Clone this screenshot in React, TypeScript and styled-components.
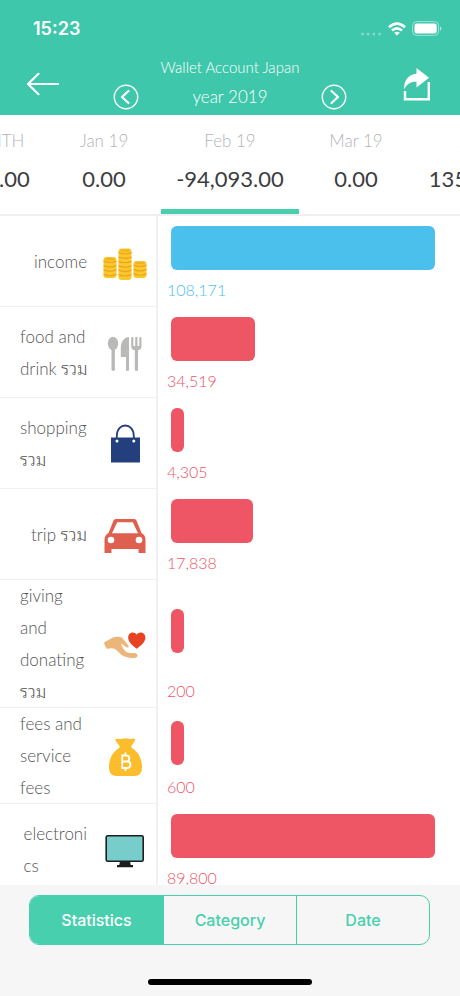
import React from "react";
import styled, { createGlobalStyle } from "styled-components";

const GREEN = "#3fc7ab";
const MINT = "#48cfad";
const RED = "#ee5565";
const BLUE = "#4bc0ec";

const Global = createGlobalStyle`
  * { box-sizing: border-box; }
  body { margin: 0; background: #fff; }
  button { font: inherit; color: inherit; background: none; border: 0; padding: 0; cursor: pointer; }
  svg { display: block; }
`;

const Screen = styled.div`
  display: flex;
  flex-direction: column;
  height: 100vh;
  overflow: hidden;
  background: #fff;
  color: #555;
  font-family: Lato, "Noto Sans Thai Looped", Loma, Waree, Garuda, "Noto Sans Thai", sans-serif;
  font-weight: 300;
`;

const Header = styled.header`
  flex: none;
  background: ${GREEN};
  color: #fff;
`;

const StatusBar = styled.div`
  display: flex;
  align-items: center;
  justify-content: space-between;
  height: 53px;
  padding: 4px 17px 0 33px;
  font: 600 18px/24px Inter, sans-serif;
`;

const StatusIcons = styled.div`
  display: flex;
  align-items: center;
  gap: 6px;
`;

const NavBar = styled.div`
  display: grid;
  grid-template-columns: 60px 1fr 60px;
  align-items: center;
  height: 62px;
  padding: 0 13px;
`;

const NavButton = styled.button`
  display: flex;
  justify-content: center;
`;

const NavTitle = styled.div`
  display: flex;
  flex-direction: column;
  align-items: center;
  padding-bottom: 2px;
`;

const AccountName = styled.h1`
  margin: 0;
  font-size: 15px;
  line-height: 28px;
  font-weight: 300;
`;

const YearPicker = styled.div`
  display: flex;
  align-items: center;
  justify-content: space-between;
  width: 234px;
  height: 32px;
  font-size: 17px;
`;

const Year = styled.span`
  padding-bottom: 2px;
`;

const Months = styled.nav`
  flex: none;
  display: grid;
  grid-template-columns: 130px repeat(3, 126px) 132px;
  justify-content: center;
  height: 101px;
  padding-left: 2px;
  overflow: hidden;
  border-bottom: 2px solid #f0f0f0;
`;

const Month = styled.button<{ $active?: boolean }>`
  position: relative;
  display: flex;
  flex-direction: column;
  align-items: center;
  padding-top: 14px;
  white-space: nowrap;

  &::after {
    content: "";
    display: ${(p) => (p.$active ? "block" : "none")};
    position: absolute;
    inset: auto -6px 0;
    height: 5px;
    background: ${MINT};
  }
`;

const MonthName = styled.span`
  font-size: 17px;
  line-height: 24px;
  color: #b4b4b8;
`;

const MonthTotal = styled.span`
  margin-top: 14px;
  font-size: 22px;
  line-height: 24px;
  font-weight: 400;
  color: #3c3c40;
`;

const Rows = styled.ul`
  flex: 1;
  min-height: 0;
  margin: 0;
  padding: 0;
  overflow: hidden;
  list-style: none;
`;

const Row = styled.li`
  display: grid;
  grid-template-columns: 158px 1fr;
  min-height: 91px;
`;

const Category = styled.div`
  display: flex;
  align-items: center;
  justify-content: flex-end;
  gap: 16px;
  padding: 0 9px 0 20px;
  border-right: 2px solid #f0f0f0;
  box-shadow: inset 0 -1px #f0f0f0;
`;

const CategoryName = styled.span<{ $fill?: boolean }>`
  width: ${(p) => (p.$fill ? "67px" : "auto")};
  font-size: 17px;
  line-height: 32px;
  white-space: pre;
`;

const Measure = styled.div`
  display: flex;
  flex-direction: column;
  padding: 0 25px 0 9px;
`;

const BarArea = styled.div`
  flex: 1;
  display: flex;
  align-items: center;
  padding-left: 4px;
`;

const Bar = styled.div<{ $color: string }>`
  min-width: 13px;
  height: 44px;
  border-radius: 6px;
  background: ${(p) => p.$color};
`;

const Amount = styled.span<{ $color: string }>`
  padding-bottom: 7px;
  font-size: 16px;
  line-height: 20px;
  color: ${(p) => p.$color};
`;

const Footer = styled.footer`
  flex: none;
  display: flex;
  flex-direction: column;
  align-items: center;
  gap: 34px;
  padding: 10px 30px 11px 29px;
  background: #f6f6f6;
`;

const Segments = styled.div`
  display: grid;
  grid-template-columns: repeat(3, 1fr);
  width: 100%;
  height: 50px;
  overflow: hidden;
  border: 1px solid ${MINT};
  border-radius: 10px;
`;

const Segment = styled.button<{ $active?: boolean }>`
  font: 500 16px/24px Inter, sans-serif;
  color: ${(p) => (p.$active ? "#fff" : MINT)};
  background: ${(p) => (p.$active ? MINT : "transparent")};

  & + & { border-left: 1px solid ${MINT}; }
`;

const HomeIndicator = styled.div`
  width: 164px;
  height: 6px;
  border-radius: 3px;
  background: #000;
`;

const CoinStack = ({ x, top, bottom }: { x: number; top: number; bottom: number }) => {
  const lines: number[] = [];
  for (let y = top + 5; y < bottom - 1; y += 4.4) lines.push(y);
  return (
    <g>
      <rect x={x} y={top} width="13" height={bottom - top} rx="3" fill="#fcc72c" />
      {lines.map((y) => (
        <path key={y} d={`M${x} ${y - 1}q6.500 3 13 0`} fill="none" stroke="#e9a31c" strokeWidth="1.100" />
      ))}
      <ellipse cx={x + 6.5} cy={top + 2} rx="5" ry="1.300" fill="#f5b324" />
    </g>
  );
};

const icons: Record<string, React.ReactNode> = {
  coins: (
    <>
      <CoinStack x={0.5} top={17} bottom={38} />
      <CoinStack x={15.5} top={8.5} bottom={40} />
      <CoinStack x={30.5} top={21} bottom={38} />
    </>
  ),
  cutlery: (
    <g fill="#b9b9b7">
      <ellipse cx="10" cy="12.500" rx="5.200" ry="6.800" />
      <rect x="8.500" y="16" width="3.400" height="24" rx="1.700" />
      <path d="M26 6v32.500a1.500 1.500 0 0 1-3 0V26h-5.200V17c0-6 3-10.500 8.200-11z" />
      <path d="M28.200 7a1.100 1.100 0 0 1 2.200 0v8h1.800V7a1.100 1.100 0 0 1 2.300 0v8h1.800V7a1.100 1.100 0 0 1 2.200 0v8.500c0 2-1.200 3.300-3.500 3.700v19.300a1.600 1.600 0 0 1-3.200 0V19.200c-2.400-.4-3.600-1.700-3.600-3.700z" />
    </g>
  ),
  shopping: (
    <>
      <path d="M8 15.500h29v25H8z" fill="#243f7d" />
      <path d="M13.800 18.500V14c0-14 17-14 17 0v4.500" fill="none" stroke="#243f7d" strokeWidth="1.800" />
      <circle cx="14" cy="19" r="1.500" fill="#fff" />
      <circle cx="30.800" cy="19" r="1.500" fill="#fff" />
    </>
  ),
  car: (
    <>
      <path
        fillRule="evenodd"
        fill="#e0604f"
        d="M13.500 6h17c1.600 0 2.600.6 3.200 2l4.800 12c2.600 1.500 4 3.500 4 6.500V40h-7v-4h-27v4h-7V26.500c0-3 1.400-5 4-6.500l4.800-12c.6-1.400 1.600-2 3.200-2zm.7 3.200L9 20.300h26L29.800 9.200z"
      />
      <circle cx="8" cy="27" r="3.300" fill="#fff" />
      <circle cx="36" cy="27" r="3.300" fill="#fff" />
    </>
  ),
  giving: (
    <>
      <path
        fill="#ecb67a"
        d="M1 20.500l8.500-4.700c2.600-1.300 7-1.300 9.500-.3l6.500 8.200c.8 1.500-.9 2.400-2.200 1.500l-5.300-4c1 3.800 3.200 7.700 6.300 9.300 2.900 1.200 6.500 0 9.200 1.200 1.700 1 1 3.600-1 4-4.500.5-9 0-12.500-1.900-3.500-2.300-6.200-6.600-9.500-7.400-3.200-.5-5.200.8-7 .2C2.500 24.500 1.200 22.500 1 20.500z"
      />
      <path
        fill="#e74323"
        d="M33.700 26.700c-4.200-3.200-8.500-6.700-8.500-11 0-5.300 6-6.800 8.500-3 2.500-3.800 8.700-2.300 8.700 3 0 4.300-4.400 7.800-8.700 11z"
      />
    </>
  ),
  fees: (
    <>
      <path
        fill="#fbbd2c"
        d="M12.800 5.200c2-1.300 4 .2 6.500-.5 2.200-.7 4.200-.7 6.400 0 2.500.7 4.500-.8 6 .3.700.5.4 1.200 0 1.900L28.500 12v1.800C34.500 17 39 24 39 33c0 6-2.500 9-8 9H14c-5.500 0-8-3-8-9 0-9 4.500-16 10.500-19.200V12l-3.700-5c-.4-.7-.6-1.300 0-1.800z"
      />
      <path
        d="M19.200 21v13.500M18.400 21.500h4.800c4.200 0 4.200 6 0 6h-4M19.200 27.500h4.800c4.600 0 4.600 6.500 0 6.500h-5.600M22.500 18.500v3M22.500 34v3"
        fill="none"
        stroke="#fff"
        strokeWidth="1.800"
      />
    </>
  ),
  monitor: (
    <>
      <path d="M17 33h10l.7 4H30v2.200H14V37h2.300z" fill="#1d1d1f" />
      <rect x="3.200" y="7.700" width="37" height="25.500" rx="1.500" fill="#76cdc9" stroke="#1d1d1f" strokeWidth="1.600" />
    </>
  ),
};

const months = [
  { name: "ALL MONTH", total: "-94,093.00" },
  { name: "Jan 19", total: "0.00" },
  { name: "Feb 19", total: "-94,093.00", active: true },
  { name: "Mar 19", total: "0.00" },
  { name: "Apr 19", total: "135,000.00" },
];

const rows = [
  { name: "income", icon: "coins", amount: "108,171", share: 100, color: BLUE },
  { name: "food and\ndrink รวม", icon: "cutlery", amount: "34,519", share: 32, color: RED, fill: true },
  { name: "shopping\nรวม", icon: "shopping", amount: "4,305", share: 4, color: RED, fill: true },
  { name: "trip รวม", icon: "car", amount: "17,838", share: 31, color: RED },
  { name: "giving\nand\ndonating\nรวม", icon: "giving", amount: "200", share: 1, color: RED, fill: true },
  { name: "fees and\nservice\nfees", icon: "fees", amount: "600", share: 1, color: RED, fill: true },
  { name: "electroni\ncs", icon: "monitor", amount: "89,800", share: 100, color: RED },
];

const Chevron = ({ d }: { d: string }) => (
  <svg width="26" height="26" viewBox="0 0 26 26" fill="none" stroke="#fff">
    <circle cx="13" cy="13" r="11.700" strokeWidth="1.400" />
    <path d={d} strokeWidth="2.200" strokeLinecap="round" strokeLinejoin="round" />
  </svg>
);

export default function App() {
  return (
    <Screen>
      <Global />
      <Header>
        <StatusBar>
          <span>15:23</span>
          <StatusIcons>
            <svg width="22" height="14" viewBox="0 0 22 14" fill="#fff" opacity="0.350">
              <circle cx="2.500" cy="12" r="1.500" />
              <circle cx="8.200" cy="12" r="1.500" />
              <circle cx="13.900" cy="12" r="1.500" />
              <circle cx="19.600" cy="12" r="1.500" />
            </svg>
            <svg width="18" height="14" viewBox="0 0 18 14" fill="none" stroke="#fff" strokeWidth="2.600">
              <path d="M1 5.300q8-7.400 16 0M4 8.600q5-4.400 10 0" />
              <path d="M9 13.500L6.200 10.800q2.800-2.200 5.600 0z" fill="#fff" stroke="none" />
            </svg>
            <svg width="31" height="15" viewBox="0 0 31 15">
              <rect x="0.600" y="0.600" width="26" height="13.800" rx="4" fill="none" stroke="#fff" strokeOpacity="0.500" />
              <rect x="2.500" y="2.500" width="22.200" height="10" rx="2.200" fill="#fff" />
              <path d="M28 5.200q3 2.300 0 4.600z" fill="#fff" fillOpacity="0.600" />
            </svg>
          </StatusIcons>
        </StatusBar>
        <NavBar>
          <NavButton aria-label="Back">
            <svg width="34" height="24" viewBox="0 0 34 24" fill="none" stroke="#fff" strokeWidth="2.200" strokeLinecap="round" strokeLinejoin="round">
              <path d="M32 12H2M12.500 1.800L2 12l10.500 10.200" />
            </svg>
          </NavButton>
          <NavTitle>
            <AccountName>Wallet Account Japan</AccountName>
            <YearPicker>
              <NavButton aria-label="Previous year">
                <Chevron d="M15.500 7l-6.500 6 6.500 6" />
              </NavButton>
              <Year>year 2019</Year>
              <NavButton aria-label="Next year">
                <Chevron d="M10.500 7l6.500 6-6.500 6" />
              </NavButton>
            </YearPicker>
          </NavTitle>
          <NavButton aria-label="Share">
            <svg width="28" height="34" viewBox="0 0 28 34" fill="#fff">
              <path d="M13.500 1L26 10.800 13.500 20.500v-5.700C7.500 14.500 4 17 1 22.500 1 13.500 5 7.500 13.500 6.800z" />
              <path d="M2 24v8.300h23.800V15" fill="none" stroke="#fff" strokeWidth="2.400" />
            </svg>
          </NavButton>
        </NavBar>
      </Header>
      <Months>
        {months.map((m) => (
          <Month key={m.name} $active={m.active}>
            <MonthName>{m.name}</MonthName>
            <MonthTotal>{m.total}</MonthTotal>
          </Month>
        ))}
      </Months>
      <Rows>
        {rows.map((r) => (
          <Row key={r.icon}>
            <Category>
              <CategoryName $fill={r.fill}>{r.name}</CategoryName>
              <svg width="44" height="44" viewBox="0 0 44 44">
                {icons[r.icon]}
              </svg>
            </Category>
            <Measure>
              <BarArea>
                <Bar $color={r.color} style={{ width: `${r.share}%` }} />
              </BarArea>
              <Amount $color={r.color}>{r.amount}</Amount>
            </Measure>
          </Row>
        ))}
      </Rows>
      <Footer>
        <Segments>
          <Segment $active>Statistics</Segment>
          <Segment>Category</Segment>
          <Segment>Date</Segment>
        </Segments>
        <HomeIndicator />
      </Footer>
    </Screen>
  );
}
